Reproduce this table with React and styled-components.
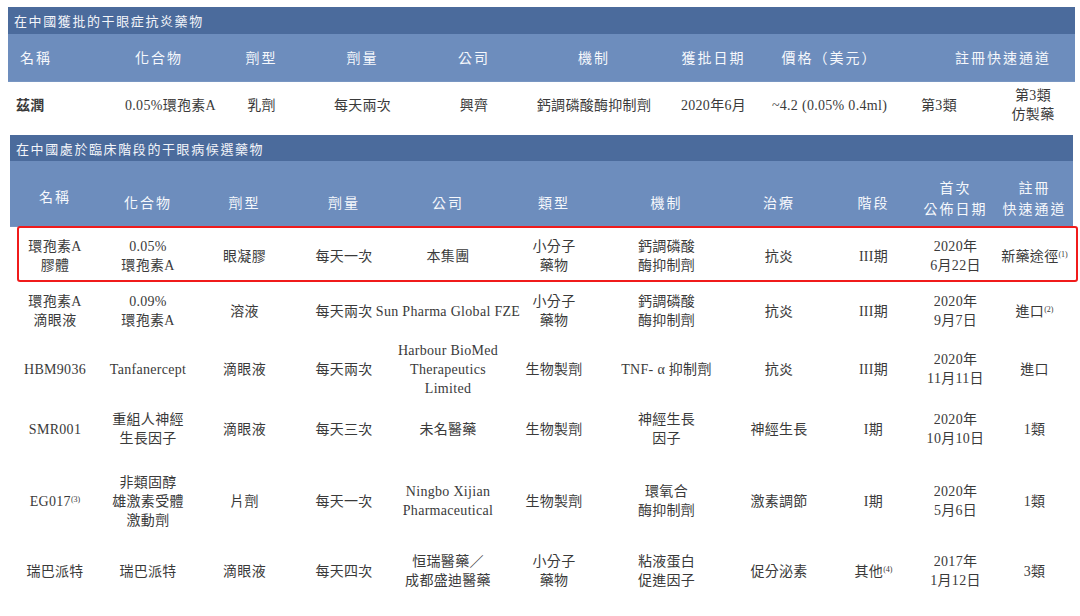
import React from 'react';
import styled, { createGlobalStyle } from 'styled-components';

const GlobalStyle = createGlobalStyle`
  html, body {
    margin: 0;
    padding: 0;
    background: #ffffff;
  }
  body {
    font-family: "Liberation Serif", "Noto Sans CJK TC", serif;
  }
`;

const Page = styled.div`
  width: 1080px;
  height: 616px;
  padding-top: 7px;
  box-sizing: border-box;
  background: #fff;
  overflow: hidden;
`;

const Table = styled.div`
  margin-left: ${p => p.$left}px;
  width: ${p => p.$width}px;
  margin-bottom: ${p => p.$gap || 0}px;
`;

const TitleBar = styled.div`
  height: ${p => p.$h}px;
  background: #4b6b9c;
  color: #f3f5fa;
  font-family: "Noto Sans CJK TC", sans-serif;
  font-size: 13px;
  letter-spacing: 1.6px;
  display: flex;
  align-items: center;
  padding-left: 6px;
`;

const Grid = styled.div`
  display: grid;
  grid-template-columns: ${p => p.$cols};
`;

const HeadCell = styled.div`
  height: ${p => p.$h}px;
  background: #6d8dbd;
  color: #f6f8fc;
  font-family: "Noto Sans CJK TC", sans-serif;
  font-size: 14px;
  letter-spacing: 2px;
  line-height: 21px;
  display: flex;
  flex-direction: column;
  justify-content: center;
  align-items: ${p => (p.$left ? 'flex-start' : 'center')};
  padding: ${p => p.$pad || '0'};
  box-sizing: border-box;
  white-space: nowrap;
  grid-column: span ${p => p.$span || 1};
  border-bottom: 1.5px solid ${p => (p.$mark ? '#e7ebf2' : '#7896c2')};
`;

const Row = styled.div`
  display: contents;
`;

const Cell = styled.div`
  height: ${p => p.$h}px;
  color: #3a3a3a;
  font-size: 14px;
  letter-spacing: 0.3px;
  line-height: 19px;
  display: flex;
  flex-direction: column;
  justify-content: center;
  align-items: ${p => (p.$left ? 'flex-start' : 'center')};
  text-align: center;
  padding: ${p => p.$pad || '0'};
  box-sizing: border-box;
  white-space: nowrap;
  font-weight: ${p => (p.$bold ? 700 : 400)};
`;

const HighlightWrap = styled.div`
  position: relative;
  grid-column: 1 / -1;
  display: grid;
  grid-template-columns: subgrid;
`;

const RedBox = styled.div`
  position: absolute;
  left: 7px;
  right: -5px;
  top: -1px;
  bottom: 3px;
  border: 2.5px solid #f01b1b;
  border-radius: 3px;
  pointer-events: none;
`;

const Sup = styled.sup`
  font-size: 8px;
  vertical-align: top;
  position: relative;
  top: -2px;
  letter-spacing: 0;
`;

const t1Cols = '97px 108px 97px 105px 118px 122px 117px 115px 104px 84px';
const t2Cols = '90px 96px 97px 102px 106px 106px 119px 106px 83px 81px 77px';

const approved = [
  { v: '茲潤', left: true, bold: true, pad: '0 0 0 8px' },
  { v: '0.05%環孢素A', left: true, pad: '0 0 0 20px' },
  { v: '乳劑' },
  { v: '每天兩次' },
  { v: '興齊' },
  { v: '鈣調磷酸酶抑制劑' },
  { v: '2020年6月' },
  { v: '~4.2 (0.05% 0.4ml)' },
  { v: '第3類' },
  { v: ['第3類', '仿製藥'] },
];

const t2Heads = [
  '名稱', '化合物', '劑型', '劑量', '公司', '類型', '機制', '治療', '階段',
  ['首次', '公佈日期'], ['註冊', '快速通道'],
];

const candidates = [
  {
    h: 58,
    cells: [
      ['環孢素A', '膠體'], ['0.05%', '環孢素A'], '眼凝膠', '每天一次', '本集團',
      ['小分子', '藥物'], ['鈣調磷酸', '酶抑制劑'], '抗炎', 'III期', ['2020年', '6月22日'],
      { text: '新藥途徑', sup: '(1)' },
    ],
  },
  {
    h: 52,
    cells: [
      ['環孢素A', '滴眼液'], ['0.09%', '環孢素A'], '溶液', '每天兩次', 'Sun Pharma Global FZE',
      ['小分子', '藥物'], ['鈣調磷酸', '酶抑制劑'], '抗炎', 'III期', ['2020年', '9月7日'],
      { text: '進口', sup: '(2)' },
    ],
  },
  {
    h: 64,
    cells: [
      'HBM9036', 'Tanfanercept', '滴眼液', '每天兩次', ['Harbour BioMed', 'Therapeutics', 'Limited'],
      '生物製劑', 'TNF- α 抑制劑', '抗炎', 'III期', ['2020年', '11月11日'], '進口',
    ],
  },
  {
    h: 56,
    cells: [
      'SMR001', ['重組人神經', '生長因子'], '滴眼液', '每天三次', '未名醫藥',
      '生物製劑', ['神經生長', '因子'], '神經生長', 'I期', ['2020年', '10月10日'], '1類',
    ],
  },
  {
    h: 88,
    cells: [
      { text: 'EG017', sup: '(3)' }, ['非類固醇', '雄激素受體', '激動劑'], '片劑', '每天一次',
      ['Ningbo Xijian', 'Pharmaceutical'], '生物製劑', ['環氧合', '酶抑制劑'], '激素調節', 'I期',
      ['2020年', '5月6日'], '1類',
    ],
  },
  {
    h: 52,
    cells: [
      '瑞巴派特', '瑞巴派特', '滴眼液', '每天四次', ['恒瑞醫藥／', '成都盛迪醫藥'],
      ['小分子', '藥物'], ['粘液蛋白', '促進因子'], '促分泌素', { text: '其他', sup: '(4)' },
      ['2017年', '1月12日'], '3類',
    ],
  },
];

function Lines({ value }) {
  if (Array.isArray(value)) {
    return value.map((line, i) => <span key={i}>{line}</span>);
  }
  if (value && typeof value === 'object') {
    return (
      <span>
        {value.text}
        <Sup>{value.sup}</Sup>
      </span>
    );
  }
  return <span>{value}</span>;
}

function CandidateRow({ row, highlight }) {
  const cells = row.cells.map((c, i) => (
    <Cell key={i} $h={row.h}>
      <Lines value={c} />
    </Cell>
  ));
  if (highlight) {
    return (
      <HighlightWrap>
        {cells}
        <RedBox />
      </HighlightWrap>
    );
  }
  return <Row>{cells}</Row>;
}

function App() {
  return (
    <Page>
      <GlobalStyle />
      <Table $left={8} $width={1067} $gap={7}>
        <TitleBar $h={27}>在中國獲批的干眼症抗炎藥物</TitleBar>
        <Grid $cols={t1Cols}>
          <HeadCell $h={48} $left $pad="0 0 0 12px">名稱</HeadCell>
          <HeadCell $h={48}>化合物</HeadCell>
          <HeadCell $h={48}>劑型</HeadCell>
          <HeadCell $h={48}>劑量</HeadCell>
          <HeadCell $h={48}>公司</HeadCell>
          <HeadCell $h={48}>機制</HeadCell>
          <HeadCell $h={48}>獲批日期</HeadCell>
          <HeadCell $h={48}>價格（美元）</HeadCell>
          <HeadCell $h={48} $span={2} $pad="0 0 0 44px">註冊快速通道</HeadCell>
          {approved.map((c, i) => (
            <Cell key={i} $h={46} $left={c.left} $bold={c.bold} $pad={c.pad}>
              <Lines value={c.v} />
            </Cell>
          ))}
        </Grid>
      </Table>
      <Table $left={10} $width={1063}>
        <TitleBar $h={26}>在中國處於臨床階段的干眼病候選藥物</TitleBar>
        <Grid $cols={t2Cols}>
          {t2Heads.map((h, i) => (
            <HeadCell
              key={i}
              $h={66}
              $pad={Array.isArray(h) ? '8px 0 0 0' : i === 0 ? '6px 0 0 0' : '18px 0 0 0'}
              $mark={i === 6}
            >
              <Lines value={h} />
            </HeadCell>
          ))}
          {candidates.map((row, i) => (
            <CandidateRow key={i} row={row} highlight={i === 0} />
          ))}
        </Grid>
      </Table>
    </Page>
  );
}

export default App;
